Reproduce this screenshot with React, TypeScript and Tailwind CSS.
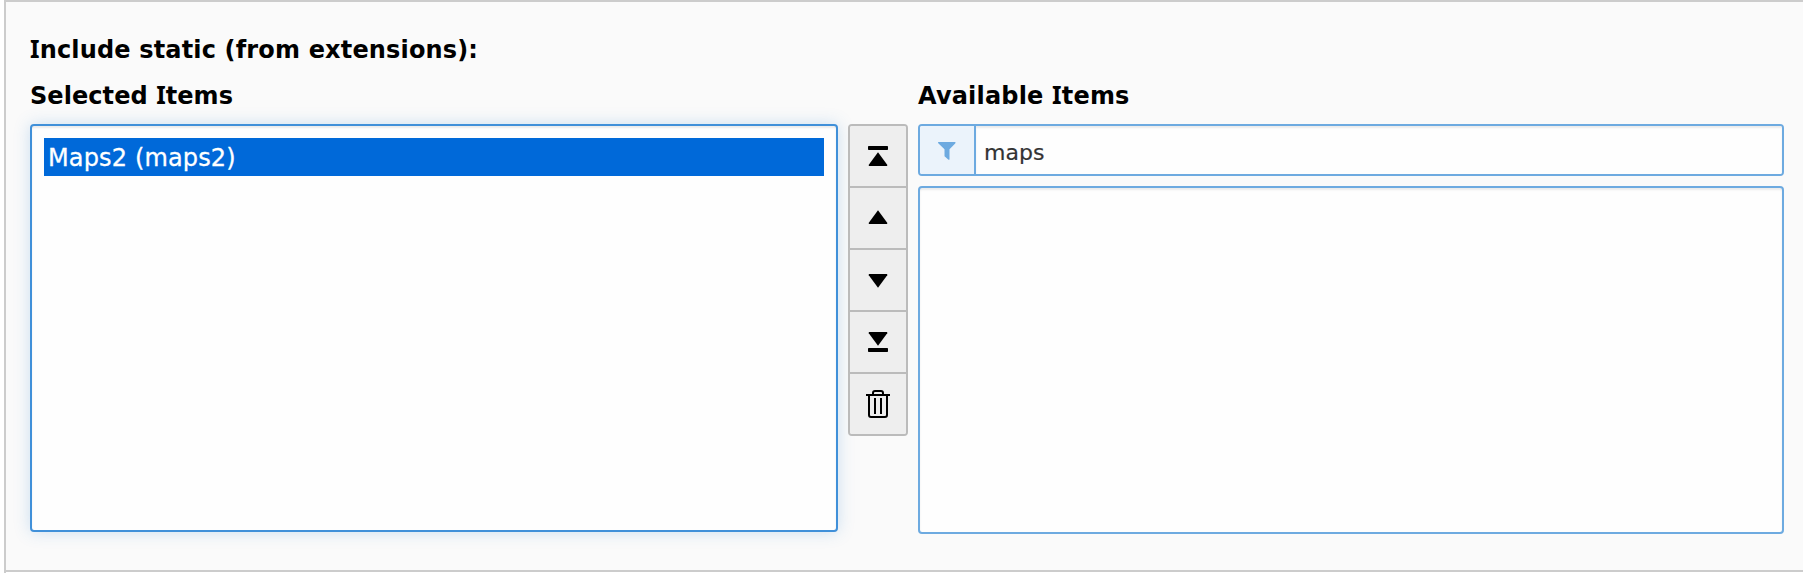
import React from "react";

const heading =
  "flex h-[46px] items-center whitespace-nowrap text-[24px] leading-[46px] font-bold text-black";

function SerifI() {
  return <span className="font-['Noto_Sans',sans-serif] text-[24.5px]">I</span>;
}

function ToolButton({ label, children }: { label: string; children: React.ReactNode }) {
  return (
    <button
      type="button"
      aria-label={label}
      className="block h-[62px] w-full border-b-2 border-[#bbbbbb] bg-[#eeeeee] last:h-[60px] last:border-b-0"
    >
      <svg width="56" height="60" viewBox="0 0 56 60" className="block" fill="black">
        {children}
      </svg>
    </button>
  );
}

export default function App() {
  return (
    <div className="h-[573px] w-[1803px] overflow-hidden bg-white pl-[4px] font-['DejaVu_Sans',Verdana,sans-serif]">
      <div className="h-[573px] border-l-2 border-[#cccccc]">
        <div className="h-[572px] border-y-2 border-[#cccccc] bg-[#fafafa] pt-[24px] pr-[19px] pl-[24px]">
          <div className={heading}>
            <span className="tracking-[0.16px]">
              <SerifI />nclude static (from extensions):
            </span>
          </div>
          <div className="flex items-start">
            <section className="w-[808px]">
              <h2 className={heading}>
                <span className="tracking-[0.06px]">
                  Selected <SerifI />tems
                </span>
              </h2>
              <div className="mt-[6px] h-[408px] rounded-[4px] border-2 border-[#4090d9] bg-[#fefefe] p-[12px] shadow-[inset_0_2px_2px_rgba(0,0,0,0.075),0_0_16px_rgba(64,144,217,0.25)]">
                <div className="h-[38px] bg-[#0069d9] pl-[4px] text-[24px] leading-[40px] tracking-[0.14px] text-white [-webkit-text-stroke:0.3px_white]">
                  Maps2 (maps2)
                </div>
              </div>
            </section>
            <div className="mt-[52px] ml-[10px] h-[312px] w-[60px] overflow-hidden rounded-[4px] border-2 border-[#bbbbbb]">
              <ToolButton label="Move to top">
                <rect x="18" y="20" width="20" height="4" rx="0.8" />
                <path d="M28 26.3 L37.2 38.8 V40 H18.8 V38.8Z" />
              </ToolButton>
              <ToolButton label="Move up">
                <path d="M28 22.3 L37.2 34.8 V36 H18.8 V34.8Z" />
              </ToolButton>
              <ToolButton label="Move down">
                <path d="M28 37.7 L37.2 25.2 V24 H18.8 V25.2Z" />
              </ToolButton>
              <ToolButton label="Move to bottom">
                <path d="M28 33.7 L37.2 21.2 V20 H18.8 V21.2Z" />
                <rect x="18" y="36" width="20" height="4" rx="0.8" />
              </ToolButton>
              <ToolButton label="Remove">
                <path
                  d="M16 21H40M19 21V41Q19 43 21 43H35Q37 43 37 41V21M23 21V19Q23 17 25 17H31Q33 17 33 19V21M25 24V40M31 24V40"
                  fill="none"
                  stroke="black"
                  strokeWidth="2"
                />
              </ToolButton>
            </div>
            <section className="ml-[10px] w-[866px]">
              <h2 className={heading}>
                <span className="tracking-[0.18px]">
                  Available <SerifI />tems
                </span>
              </h2>
              <div className="mt-[6px] flex h-[52px] overflow-hidden rounded-[4px] border-2 border-[#6daae0]">
                <div className="w-[56px] border-r-2 border-[#6daae0] bg-[#ebf3fb]">
                  <svg width="54" height="48" viewBox="0 0 54 48" className="block" fill="#6daae0">
                    <path d="M18.5 16H35Q36.2 16.3 35.2 17.5L29.5 23.3V33.2Q29.3 34.2 28.2 33.5L24.5 30.2V23.3L18.5 17.5Q17.2 16.3 18.5 16Z" />
                  </svg>
                </div>
                <div className="flex-1 bg-[#fefefe] pl-[8px] text-[22px] leading-[53px] text-[#333333] shadow-[inset_0_2px_2px_rgba(0,0,0,0.075)] [-webkit-text-stroke:0.2px_#333333]">
                  maps
                </div>
              </div>
              <div className="mt-[10px] h-[348px] rounded-[4px] border-2 border-[#6daae0] bg-[#fefefe] shadow-[inset_0_2px_2px_rgba(0,0,0,0.075)]" />
            </section>
          </div>
        </div>
      </div>
    </div>
  );
}
